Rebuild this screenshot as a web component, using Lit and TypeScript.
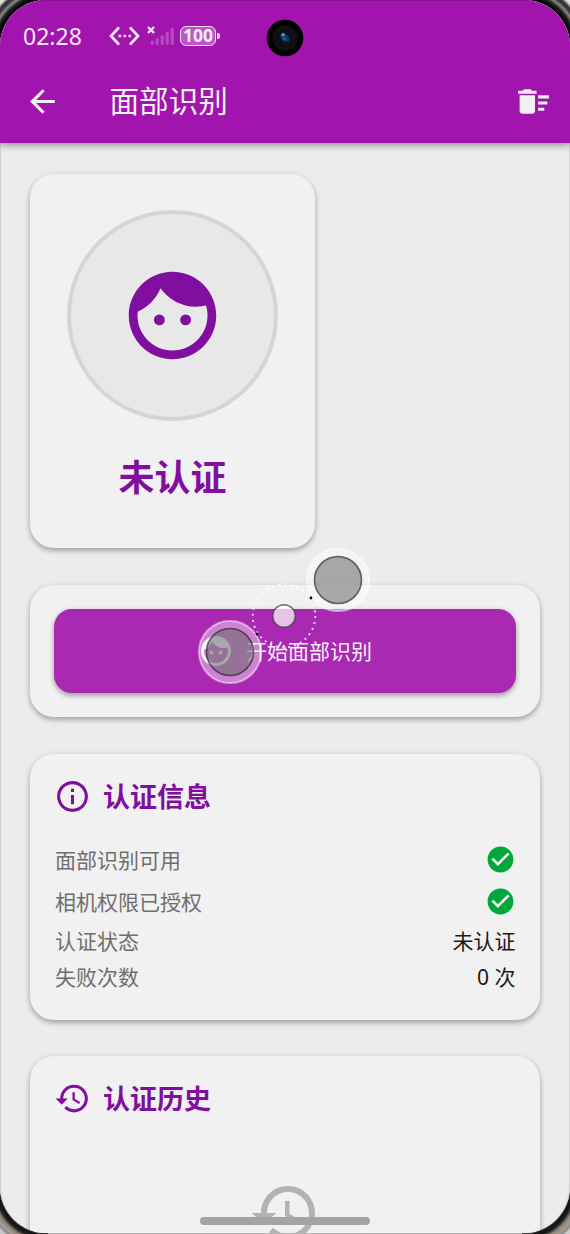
import { LitElement, html, css, svg } from "lit";
import { customElement, property } from "lit/decorators.js";

const ICONS: Record<string, string> = {
  face: "M9 11.75a1.25 1.25 0 1 0 0 2.5 1.25 1.25 0 0 0 0-2.5zm6 0a1.25 1.25 0 1 0 0 2.5 1.25 1.25 0 0 0 0-2.5zM12 2C6.48 2 2 6.48 2 12s4.48 10 10 10 10-4.48 10-10S17.52 2 12 2zm0 18c-4.41 0-8-3.59-8-8 0-.29.02-.58.05-.86 2.36-1.05 4.23-2.98 5.21-5.37C11.07 8.33 14.05 10 17.42 10c.78 0 1.53-.09 2.25-.26.21.71.33 1.47.33 2.26 0 4.41-3.59 8-8 8z",
  back: "M20 11H7.83l5.59-5.59L12 4l-8 8 8 8 1.41-1.41L7.83 13H20v-2z",
  sweep: "M15 16h4v2h-4zm0-8h7v2h-7zm0 4h6v2h-6zM3 18c0 1.1.9 2 2 2h6c1.1 0 2-.9 2-2V8H3v10zM14 5h-3l-1-1H6L5 5H2v2h12z",
  info: "M11 7h2v2h-2zm0 4h2v6h-2zm1-9C6.48 2 2 6.48 2 12s4.48 10 10 10 10-4.48 10-10S17.52 2 12 2zm0 18c-4.41 0-8-3.59-8-8s3.59-8 8-8 8 3.59 8 8-3.59 8-8 8z",
  check: "M12 2C6.48 2 2 6.48 2 12s4.48 10 10 10 10-4.48 10-10S17.52 2 12 2zm-2 15l-5-5 1.41-1.41L10 14.17l7.59-7.59L19 8l-9 9z",
  history: "M13 3c-4.97 0-9 4.03-9 9H1l3.89 3.89.07.14L9 12H6c0-3.87 3.13-7 7-7s7 3.13 7 7-3.13 7-7 7c-1.93 0-3.68-.79-4.94-2.06l-1.42 1.42C8.27 19.99 10.51 21 13 21c4.97 0 9-4.03 9-9s-4.03-9-9-9zm-1 5v5l4.28 2.54.72-1.21-3.5-2.08V8H12z",
};

@customElement("md-icon")
class MdIcon extends LitElement {
  @property() name = "";
  static styles = css`
    :host { display: block; flex: none; width: 36px; height: 36px; }
    .glyph { display: block; width: 100%; height: 100%; fill: currentColor; }
  `;
  render() {
    return html`<svg class="glyph" viewBox="0 0 24 24"><path d=${ICONS[this.name]}></path></svg>`;
  }
}

@customElement("status-bar")
class StatusBar extends LitElement {
  static styles = css`
    :host { display: flex; align-items: center; height: 69px; padding-left: 23px; color: #f5eaf7; }
    .time { width: 85px; font: 400 23px/30px "Noto Sans", sans-serif; }
    .net { width: 32px; height: 26px; margin-right: 7px; }
    .signal { width: 27px; height: 22px; margin-right: 6px; }
    .battery {
      box-sizing: border-box; width: 36px; height: 20px; border: 1.5px solid #f0dff3; border-radius: 6px;
      background: #bd55c8; display: flex; align-items: center; justify-content: center;
      font: 700 17.5px/17px "Noto Sans", sans-serif;
    }
    .tip { width: 2.5px; height: 6px; margin-left: 1px; background: #e9cfee; border-radius: 0 2px 2px 0; }
    .camera { position: absolute; left: 266px; top: 18px; width: 38px; height: 38px; }
  `;
  render() {
    return html`
      <span class="time">02:28</span>
      <svg class="net" viewBox="0 0 32 26" fill="none" stroke="#f5eaf7" stroke-width="2.7">
        <path d="M11 4.5 3 13l8 8.5M22 4.5l8 8.5-8 8.5"></path>
        <path d="M10.5 13h12.5" stroke-width="2.7" stroke-dasharray="2.7 2.3"></path>
      </svg>
      <svg class="signal" viewBox="0 0 27 22">
        <path d="M1 2l6 6M7 2 1 8" stroke="#f5eaf7" stroke-width="2.4"></path>
        <g stroke="#b64bc3" stroke-width="3.2" stroke-linecap="round">
          <path d="M5.2 17v1.5M10.2 14.5v4M15.2 11.5v7M20.2 8v10.5M25.2 4v14.5"></path>
        </g>
      </svg>
      <span class="battery">100</span><span class="tip"></span>
      <svg class="camera" viewBox="0 0 38 38">
        <circle cx="19" cy="19" r="18.3" fill="#000"></circle>
        <circle cx="19" cy="19" r="12.6" fill="#101014"></circle>
        <circle cx="19" cy="19" r="7.5" fill="#08111d"></circle>
        <path d="M14 17q4-4 7-1t2 6q-4 2-7-1z" fill="#12395f"></path>
        <circle cx="17" cy="15.7" r="1.6" fill="#58a6d6"></circle>
        <circle cx="18.5" cy="20" r="1.2" fill="#2a6da4"></circle>
      </svg>
    `;
  }
}

@customElement("app-root")
class AppRoot extends LitElement {
  static styles = css`
    :host {
      display: block; position: relative; width: 570px; height: 1234px; overflow: hidden; background: #b4b4b4;
      font-family: "Noto Sans CJK SC", "Noto Sans", sans-serif; color: #191919;
    }
    .bezel { position: absolute; width: 48px; height: 48px; }
    .tl { left: 0; top: 0; background: radial-gradient(circle at 100% 100%, #444 46px, #000 50px, #222 54px, #888 57px, #333 60px, #333 62px, #ddd 65px); }
    .tr { right: 0; top: 0; background: radial-gradient(circle at 0 100%, #444 46px, #000 50px, #222 54px, #888 57px, #333 60px, #333 62px, #ddd 65px); }
    .bl { left: 0; bottom: 0; background: radial-gradient(circle at 100% 0, #555 46px, #111 50px, #222 53px, #8b8376 56px, #a89e90 60px, #888 62px, #ccc 65px); }
    .br { right: 0; bottom: 0; background: radial-gradient(circle at 0 0, #555 46px, #111 50px, #222 53px, #8b8376 56px, #a89e90 60px, #888 62px, #ccc 65px); }
    .screen {
      position: relative; box-sizing: border-box; height: 1233px; overflow: hidden; padding: 0 1px;
      border-radius: 46px; background: #ececec; box-shadow: inset 1px 0 #d2d2d2, inset -1px 0 #d2d2d2;
    }
    .top { position: relative; height: 143px; margin: 0 -1px; background: #a114ad; box-shadow: 0 2px 6px rgba(0,0,0,.32), 0 3px 10px rgba(0,0,0,.1); border-top: 1px solid #84108e; box-sizing: border-box; }
    .bar { display: flex; align-items: center; height: 62px; padding: 0 18px 0 24px; color: #f1f1f1; }
    .bar md-icon { width: 37px; height: 37px; }
    .title { flex: 1; margin-left: 48.5px; padding-bottom: 2px; font-size: 29.6px; line-height: 40px; }
    .content { display: flex; flex-direction: column; align-items: stretch; padding: 31px 29px 0; }
    .card {
      box-sizing: border-box; border-radius: 24px; background: #f1f1f1;
      box-shadow: 0 3px 5px rgba(0,0,0,.24), 0 1px 7px rgba(0,0,0,.11);
    }
    .identity { align-self: flex-start; width: 285px; height: 374px; padding-top: 36px; display: flex; flex-direction: column; align-items: center; }
    .avatar { box-sizing: border-box; width: 211px; height: 211px; border: 4px solid #d5d5d5; border-radius: 50%; background: #e8e8e8; display: grid; place-items: center; color: #800fa0; }
    .avatar md-icon { width: 105px; height: 105px; }
    .state { margin-top: 28px; font-size: 36px; line-height: 52px; font-weight: 700; color: #800fa0; }
    .action { height: 132px; margin-top: 37px; padding: 24px; }
    .start { box-sizing: border-box; height: 84px; border-radius: 18px; background: #a929b3; color: #f1f1f1; display: flex; align-items: center; justify-content: center; gap: 12px; font-size: 21px; line-height: 30px; box-shadow: 0 3px 5px rgba(0,0,0,.26), 0 1px 6px rgba(0,0,0,.12); }
    .start span { padding-bottom: 2px; }
    .info { height: 266px; margin-top: 37px; padding: 24px; }
    .head { display: flex; align-items: center; gap: 12px; height: 37px; color: #800fa0; font-size: 27px; line-height: 36px; font-weight: 700; }
    .head span { padding-bottom: 2px; }
    .head md-icon { width: 37px; height: 37px; }
    .rows { margin-top: 23px; padding: 0 .5px 0 1px; }
    .row { display: flex; align-items: center; justify-content: space-between; height: 36.5px; font-size: 21px; line-height: 30px; }
    .row.tall { height: 42px; }
    .label, .value { padding-bottom: 1px; }
    .label { color: #6f6f6f; }
    .count { font-family: "Noto Sans", sans-serif; white-space: pre; line-height: 1; }
    .ok { width: 31px; height: 31px; color: #00a83b; }
    .past { height: 240px; margin-top: 36px; padding: 24px; }
    .empty { width: 72px; height: 72px; margin: 60px auto 0; color: #b2b2b2; }
    .home { position: absolute; left: 200px; top: 1217px; width: 170px; height: 8px; border-radius: 4px; background: #a4a4a4; }
    .touch { position: absolute; left: 180px; top: 540px; width: 210px; height: 160px; }
  `;

  private finger(x: number, y: number) {
    return svg`
      <circle cx=${x} cy=${y} r="31" fill="#fff" fill-opacity=".42" stroke="#fff" stroke-opacity=".5" stroke-width="2"></circle>
      <circle cx=${x} cy=${y} r="23.5" fill="#666" fill-opacity=".54" stroke="#222" stroke-opacity=".65" stroke-width="1.6"></circle>`;
  }

  render() {
    return html`
      <i class="bezel tl"></i><i class="bezel tr"></i><i class="bezel bl"></i><i class="bezel br"></i>
      <div class="screen">
        <header class="top">
          <status-bar></status-bar>
          <div class="bar">
            <md-icon name="back"></md-icon>
            <span class="title">面部识别</span>
            <md-icon name="sweep"></md-icon>
          </div>
        </header>
        <main class="content">
          <section class="card identity">
            <div class="avatar"><md-icon name="face"></md-icon></div>
            <div class="state">未认证</div>
          </section>
          <section class="card action">
            <div class="start"><md-icon name="face"></md-icon><span>开始面部识别</span></div>
          </section>
          <section class="card info">
            <div class="head"><md-icon name="info"></md-icon><span>认证信息</span></div>
            <div class="rows">
              <div class="row tall"><span class="label">面部识别可用</span><md-icon class="ok" name="check"></md-icon></div>
              <div class="row tall"><span class="label">相机权限已授权</span><md-icon class="ok" name="check"></md-icon></div>
              <div class="row"><span class="label">认证状态</span><span class="value">未认证</span></div>
              <div class="row"><span class="label">失败次数</span><span class="value"><span class="count">0 </span>次</span></div>
            </div>
          </section>
          <section class="card past">
            <div class="head"><md-icon name="history"></md-icon><span>认证历史</span></div>
            <md-icon class="empty" name="history"></md-icon>
          </section>
        </main>
        <div class="home"></div>
      </div>
      <svg class="touch" viewBox="180 540 210 160">
        <circle cx="284" cy="616" r="31.3" fill="none" stroke="#fff" stroke-opacity=".8" stroke-width="2" stroke-dasharray="2 4.15"></circle>
        ${this.finger(230, 652)}
        ${this.finger(338, 580)}
        <circle cx="311" cy="598" r="1.4" fill="#000"></circle>
        <circle cx="257" cy="634" r="1.4" fill="#000"></circle>
        <circle cx="284" cy="616" r="11.3" fill="#fff" fill-opacity=".72" stroke="#444" stroke-opacity=".75" stroke-width="1.6"></circle>
      </svg>
    `;
  }
}
